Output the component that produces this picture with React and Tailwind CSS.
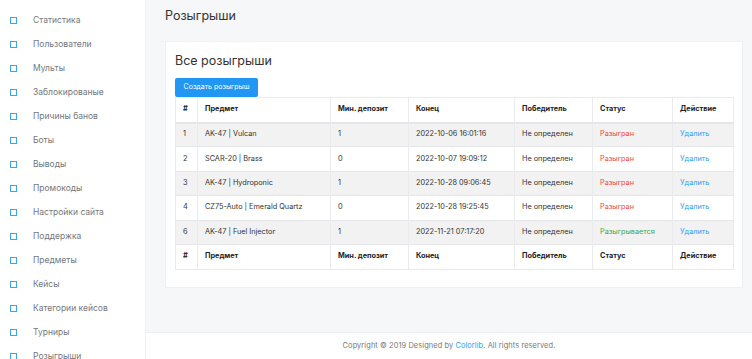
import React from "react";

const menu = [
  "Статистика",
  "Пользователи",
  "Мульты",
  "Заблокированые",
  "Причины банов",
  "Боты",
  "Выводы",
  "Промокоды",
  "Настройки сайта",
  "Поддержка",
  "Предметы",
  "Кейсы",
  "Категории кейсов",
  "Турниры",
  "Розыгрыши",
];

const rows = [
  ["1", "AK-47 | Vulcan", "1", "2022-10-06 16:01:16", "Не определен", "Разыгран"],
  ["2", "SCAR-20 | Brass", "0", "2022-10-07 19:09:12", "Не определен", "Разыгран"],
  ["3", "AK-47 | Hydroponic", "1", "2022-10-28 09:06:45", "Не определен", "Разыгран"],
  ["4", "CZ75-Auto | Emerald Quartz", "0", "2022-10-28 19:25:45", "Не определен", "Разыгран"],
  ["6", "AK-47 | Fuel Injector", "1", "2022-11-21 07:17:20", "Не определен", "Разыгрывается"],
];

const widths = ["w-[22px]", "w-[133px]", "w-[78px]", "w-[106px]", "w-[78px]", "w-[80px]", "w-[61px]"];
const heads = ["#", "Предмет", "Мин. депозит", "Конец", "Победитель", "Статус", "Действие"];

function HeadRow({ top }) {
  return (
    <tr className={top ? "h-[25px] border-b-2 border-[#e4e6e9]" : "h-[25px] border-t border-[#e4e6e9]"}>
      {heads.map((h, i) => (
        <th
          key={i}
          className={`${widths[i]} border-r border-[#e9ebee] pl-[7px] text-left font-bold text-[#222] last:border-r-0`}
        >
          {h}
        </th>
      ))}
    </tr>
  );
}

export default function App() {
  return (
    <div
      className="flex h-[359px] w-[752px] overflow-hidden bg-white"
      style={{ fontFamily: "Inter, 'Noto Sans', sans-serif" }}
    >
      <aside className="w-[146px] shrink-0 border-r border-[#eef0f3] bg-white pt-2">
        {menu.map((m) => (
          <div key={m} className="flex h-6 items-center">
            <span className="ml-[10px] h-[7px] w-[7px] border-[1.5px] border-[#33a6f5]" />
            <span className="ml-[16px] text-[8.5px] text-[#74777b]">{m}</span>
          </div>
        ))}
      </aside>
      <div className="flex min-w-0 flex-1 flex-col">
        <main className="h-[332px] bg-[#f6f7f9] pl-[19px] pr-[9px]">
          <h1 className="pt-[7px] text-[12.5px] leading-[17px] text-[#333]">Розыгрыши</h1>
          <div className="mt-[17px] h-[247px] border border-[#eef0f3] bg-white px-[9px]">
            <h2 className="pt-[11px] text-[12.5px] leading-[16px] text-[#333]">Все розыгрыши</h2>
            <button className="mt-[9px] flex h-[19px] w-[83px] items-center justify-center rounded-[2px] bg-[#2196f3] text-[7px] text-white">
              Создать розыгрыш
            </button>
            <table className="w-[558px] table-fixed border-collapse border border-[#e9ebee] text-[7.3px] text-[#333]">
              <thead>
                <HeadRow top />
              </thead>
              <tbody>
                {rows.map((r, i) => (
                  <tr
                    key={i}
                    className={`h-[24.4px] border-t border-[#e4e6e9] ${i % 2 === 0 ? "bg-[#f2f2f2]" : "bg-white"}`}
                  >
                    {r.map((c, j) => (
                      <td
                        key={j}
                        className={`border-r border-[#e9ebee] pl-[7px] ${
                          j === 5 ? (c === "Разыгран" ? "text-[#f4433b]" : "text-[#3fa64a]") : ""
                        }`}
                      >
                        {c}
                      </td>
                    ))}
                    <td className="pl-[7px] text-[#2a9df4]">Удалить</td>
                  </tr>
                ))}
              </tbody>
              <tfoot>
                <HeadRow />
              </tfoot>
            </table>
          </div>
        </main>
        <footer className="flex flex-1 items-center justify-center border-t border-[#eef0f3] bg-white text-[7.4px] tracking-[0.1px] text-[#777]">
          <span>
            Copyright © 2019 Designed by <span className="text-[#2a9df4]">Colorlib</span>. All rights reserved.
          </span>
        </footer>
      </div>
    </div>
  );
}
